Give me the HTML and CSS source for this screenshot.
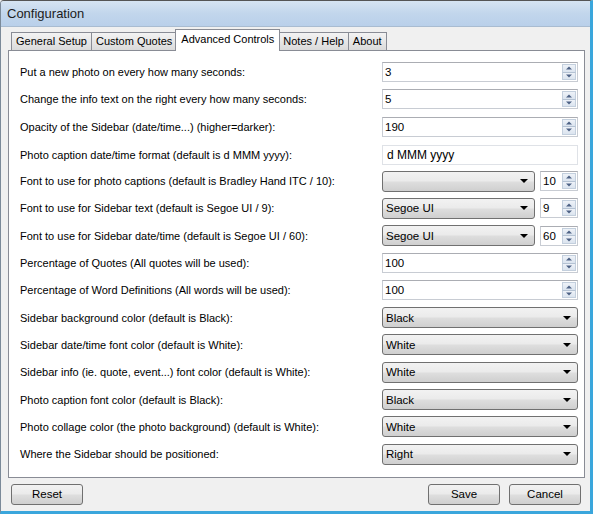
FILE: index.html
```html
<!DOCTYPE html>
<html>
<head>
<meta charset="utf-8">
<link rel="stylesheet" href="styles.css">
</head>
<body>
<div class="window">
  <div class="titlebar">Configuration</div>
  <div class="client">
    <div class="tabs">
      <div class="tab">General Setup</div>
      <div class="tab">Custom Quotes</div>
      <div class="tab active">Advanced Controls</div>
      <div class="tab">Notes / Help</div>
      <div class="tab">About</div>
    </div>
    <div class="panel">
      <div class="label">Put a new photo on every how many seconds:</div>
      <div class="spin wide"><span class="val">3</span><span class="arrows"><i class="up"></i><i class="down"></i></span></div>

      <div class="label">Change the info text on the right every how many seconds:</div>
      <div class="spin wide"><span class="val">5</span><span class="arrows"><i class="up"></i><i class="down"></i></span></div>

      <div class="label">Opacity of the Sidebar (date/time...) (higher=darker):</div>
      <div class="spin wide"><span class="val">190</span><span class="arrows"><i class="up"></i><i class="down"></i></span></div>

      <div class="label tall">Photo caption date/time format (default is d MMM yyyy):</div>
      <div class="text tall"><span class="val">d MMM yyyy</span></div>

      <div class="label">Font to use for photo captions (default is Bradley Hand ITC / 10):</div>
      <div class="pair">
        <div class="combo"><span class="val"></span><span class="arrow"></span></div>
        <div class="spin small"><span class="val">10</span><span class="arrows"><i class="up"></i><i class="down"></i></span></div>
      </div>

      <div class="label">Font to use for Sidebar text (default is Segoe UI / 9):</div>
      <div class="pair">
        <div class="combo"><span class="val">Segoe UI</span><span class="arrow"></span></div>
        <div class="spin small"><span class="val">9</span><span class="arrows"><i class="up"></i><i class="down"></i></span></div>
      </div>

      <div class="label">Font to use for Sidebar date/time (default is Segoe UI / 60):</div>
      <div class="pair">
        <div class="combo"><span class="val">Segoe UI</span><span class="arrow"></span></div>
        <div class="spin small"><span class="val">60</span><span class="arrows"><i class="up"></i><i class="down"></i></span></div>
      </div>

      <div class="label">Percentage of Quotes (All quotes will be used):</div>
      <div class="spin wide"><span class="val">100</span><span class="arrows"><i class="up"></i><i class="down"></i></span></div>

      <div class="label">Percentage of Word Definitions (All words will be used):</div>
      <div class="spin wide"><span class="val">100</span><span class="arrows"><i class="up"></i><i class="down"></i></span></div>

      <div class="label">Sidebar background color (default is Black):</div>
      <div class="combo full"><span class="val">Black</span><span class="arrow"></span></div>

      <div class="label">Sidebar date/time font color (default is White):</div>
      <div class="combo full"><span class="val">White</span><span class="arrow"></span></div>

      <div class="label">Sidebar info (ie. quote, event...) font color (default is White):</div>
      <div class="combo full"><span class="val">White</span><span class="arrow"></span></div>

      <div class="label">Photo caption font color (default is Black):</div>
      <div class="combo full"><span class="val">Black</span><span class="arrow"></span></div>

      <div class="label">Photo collage color (the photo background) (default is White):</div>
      <div class="combo full"><span class="val">White</span><span class="arrow"></span></div>

      <div class="label">Where the Sidebar should be positioned:</div>
      <div class="combo full"><span class="val">Right</span><span class="arrow"></span></div>
    </div>
    <div class="buttons">
      <div class="btn">Reset</div>
      <div class="spacer"></div>
      <div class="btn">Save</div>
      <div class="btn">Cancel</div>
    </div>
  </div>
</div>
</body>
</html>
```
FILE: styles.css
```css
html, body {
  margin: 0;
  padding: 0;
  background: #f0f0f0;
}
body {
  font-family: "Liberation Sans", Arial, sans-serif;
  font-size: 11px;
  color: #000;
}
.window {
  width: 593px;
  height: 514px;
  box-sizing: border-box;
  display: flex;
  flex-direction: column;
  background: #f0f0f0;
  border-left: 1px solid #7b8a99;
  border-right: 3px solid #3aa6dc;
  border-bottom: 3px solid #3aa6dc;
  border-top: 1px solid #555;
  border-top-left-radius: 4px;
  overflow: hidden;
}
.titlebar {
  height: 25px;
  flex: none;
  background: linear-gradient(#d6e4f2, #c2d6ec 50%, #b9d0ea);
  padding-left: 6px;
  line-height: 25px;
  font-size: 13px;
  color: #1c1c1c;
  border-bottom: 1px solid #a9bcd1;
}
.client {
  flex: 1;
  display: flex;
  flex-direction: column;
  padding: 3px 3px 0 7px;
}
.tabs {
  display: flex;
  height: 20px;
  padding-left: 3px;
  align-items: flex-end;
  position: relative;
  z-index: 1;
}
.tab {
  height: 18px;
  box-sizing: border-box;
  padding: 0 4px;
  line-height: 17px;
  border: 1px solid #898c95;
  border-bottom: none;
  background: linear-gradient(#f3f3f3, #e7e7e7 50%, #dadada);
  margin-right: -1px;
  color: #000;
  font-size: 11px;
}
.tab.active {
  height: 22px;
  margin-bottom: -1px;
  background: #fff;
  padding: 0 5px;
  margin-left: -1px;
  margin-right: -2px;
  line-height: 18px;
  position: relative;
  z-index: 2;
}
.panel {
  width: 577px;
  height: 428px;
  box-sizing: border-box;
  background: #fff;
  border: 1px solid #898c95;
  padding: 11px 8px 0 11px;
  display: grid;
  grid-template-columns: 362px 196px;
  grid-auto-rows: 20px;
  row-gap: 7.3px;
  align-items: center;
}
.label {
  white-space: nowrap;
  line-height: 20px;
}
.tall {
  margin-top: 2px;
}
.val {
  padding-left: 2px;
  white-space: nowrap;
}
.spin, .text {
  height: 20px;
  box-sizing: border-box;
  background: #fff;
  border: 1px solid #c8ccd3;
  border-top-color: #abadb3;
  display: flex;
  align-items: center;
  justify-content: space-between;
}
.text {
  border-color: #dfe2e7;
  font-size: 12px;
}
.text .val { padding-left: 4px; }
.arrows {
  display: flex;
  flex-direction: column;
  width: 14px;
  height: 16px;
  margin-right: 1px;
  gap: 0;
}
.arrows i {
  flex: 1;
  display: block;
  position: relative;
  background: linear-gradient(#eef2f8, #dbe4ef);
  border: 1px solid #c3cfdd;
}
.arrows i.up { border-bottom-color: #b4c2d3; }
.arrows i.down { border-top: none; }
.arrows i::after {
  content: "";
  position: absolute;
  left: 50%;
  top: 50%;
  border-left: 3px solid transparent;
  border-right: 3px solid transparent;
  transform: translate(-50%, -50%);
}
.arrows i.up::after { border-bottom: 3px solid #4d6185; }
.arrows i.down::after { border-top: 3px solid #4d6185; }
.pair {
  display: flex;
  gap: 5px;
  height: 21px;
  align-items: center;
}
.combo {
  height: 21px;
  box-sizing: border-box;
  border: 1px solid #707070;
  border-radius: 3px;
  background: linear-gradient(#f2f2f2, #ebebeb 45%, #dddddd 55%, #cfcfcf);
  display: flex;
  align-items: center;
  justify-content: space-between;
  padding-right: 6px;
  width: 153px;
}
.combo .val { padding-left: 3px; font-size: 11.5px; }
.combo.full { width: 196px; }
.arrow {
  width: 0;
  height: 0;
  border-left: 4px solid transparent;
  border-right: 4px solid transparent;
  border-top: 4px solid #000;
}
.spin.small { width: 38px; }
.spin .val { font-size: 11.5px; }
.buttons {
  display: flex;
  gap: 9px;
  padding: 6px 6px 0 3px;
}
.spacer { flex: 1; }
.btn {
  width: 72px;
  height: 21px;
  box-sizing: border-box;
  border: 1px solid #707070;
  border-radius: 3px;
  background: linear-gradient(#f2f2f2, #ebebeb 45%, #dddddd 55%, #cfcfcf);
  text-align: center;
  line-height: 19px;
  font-size: 11.5px;
}
```
